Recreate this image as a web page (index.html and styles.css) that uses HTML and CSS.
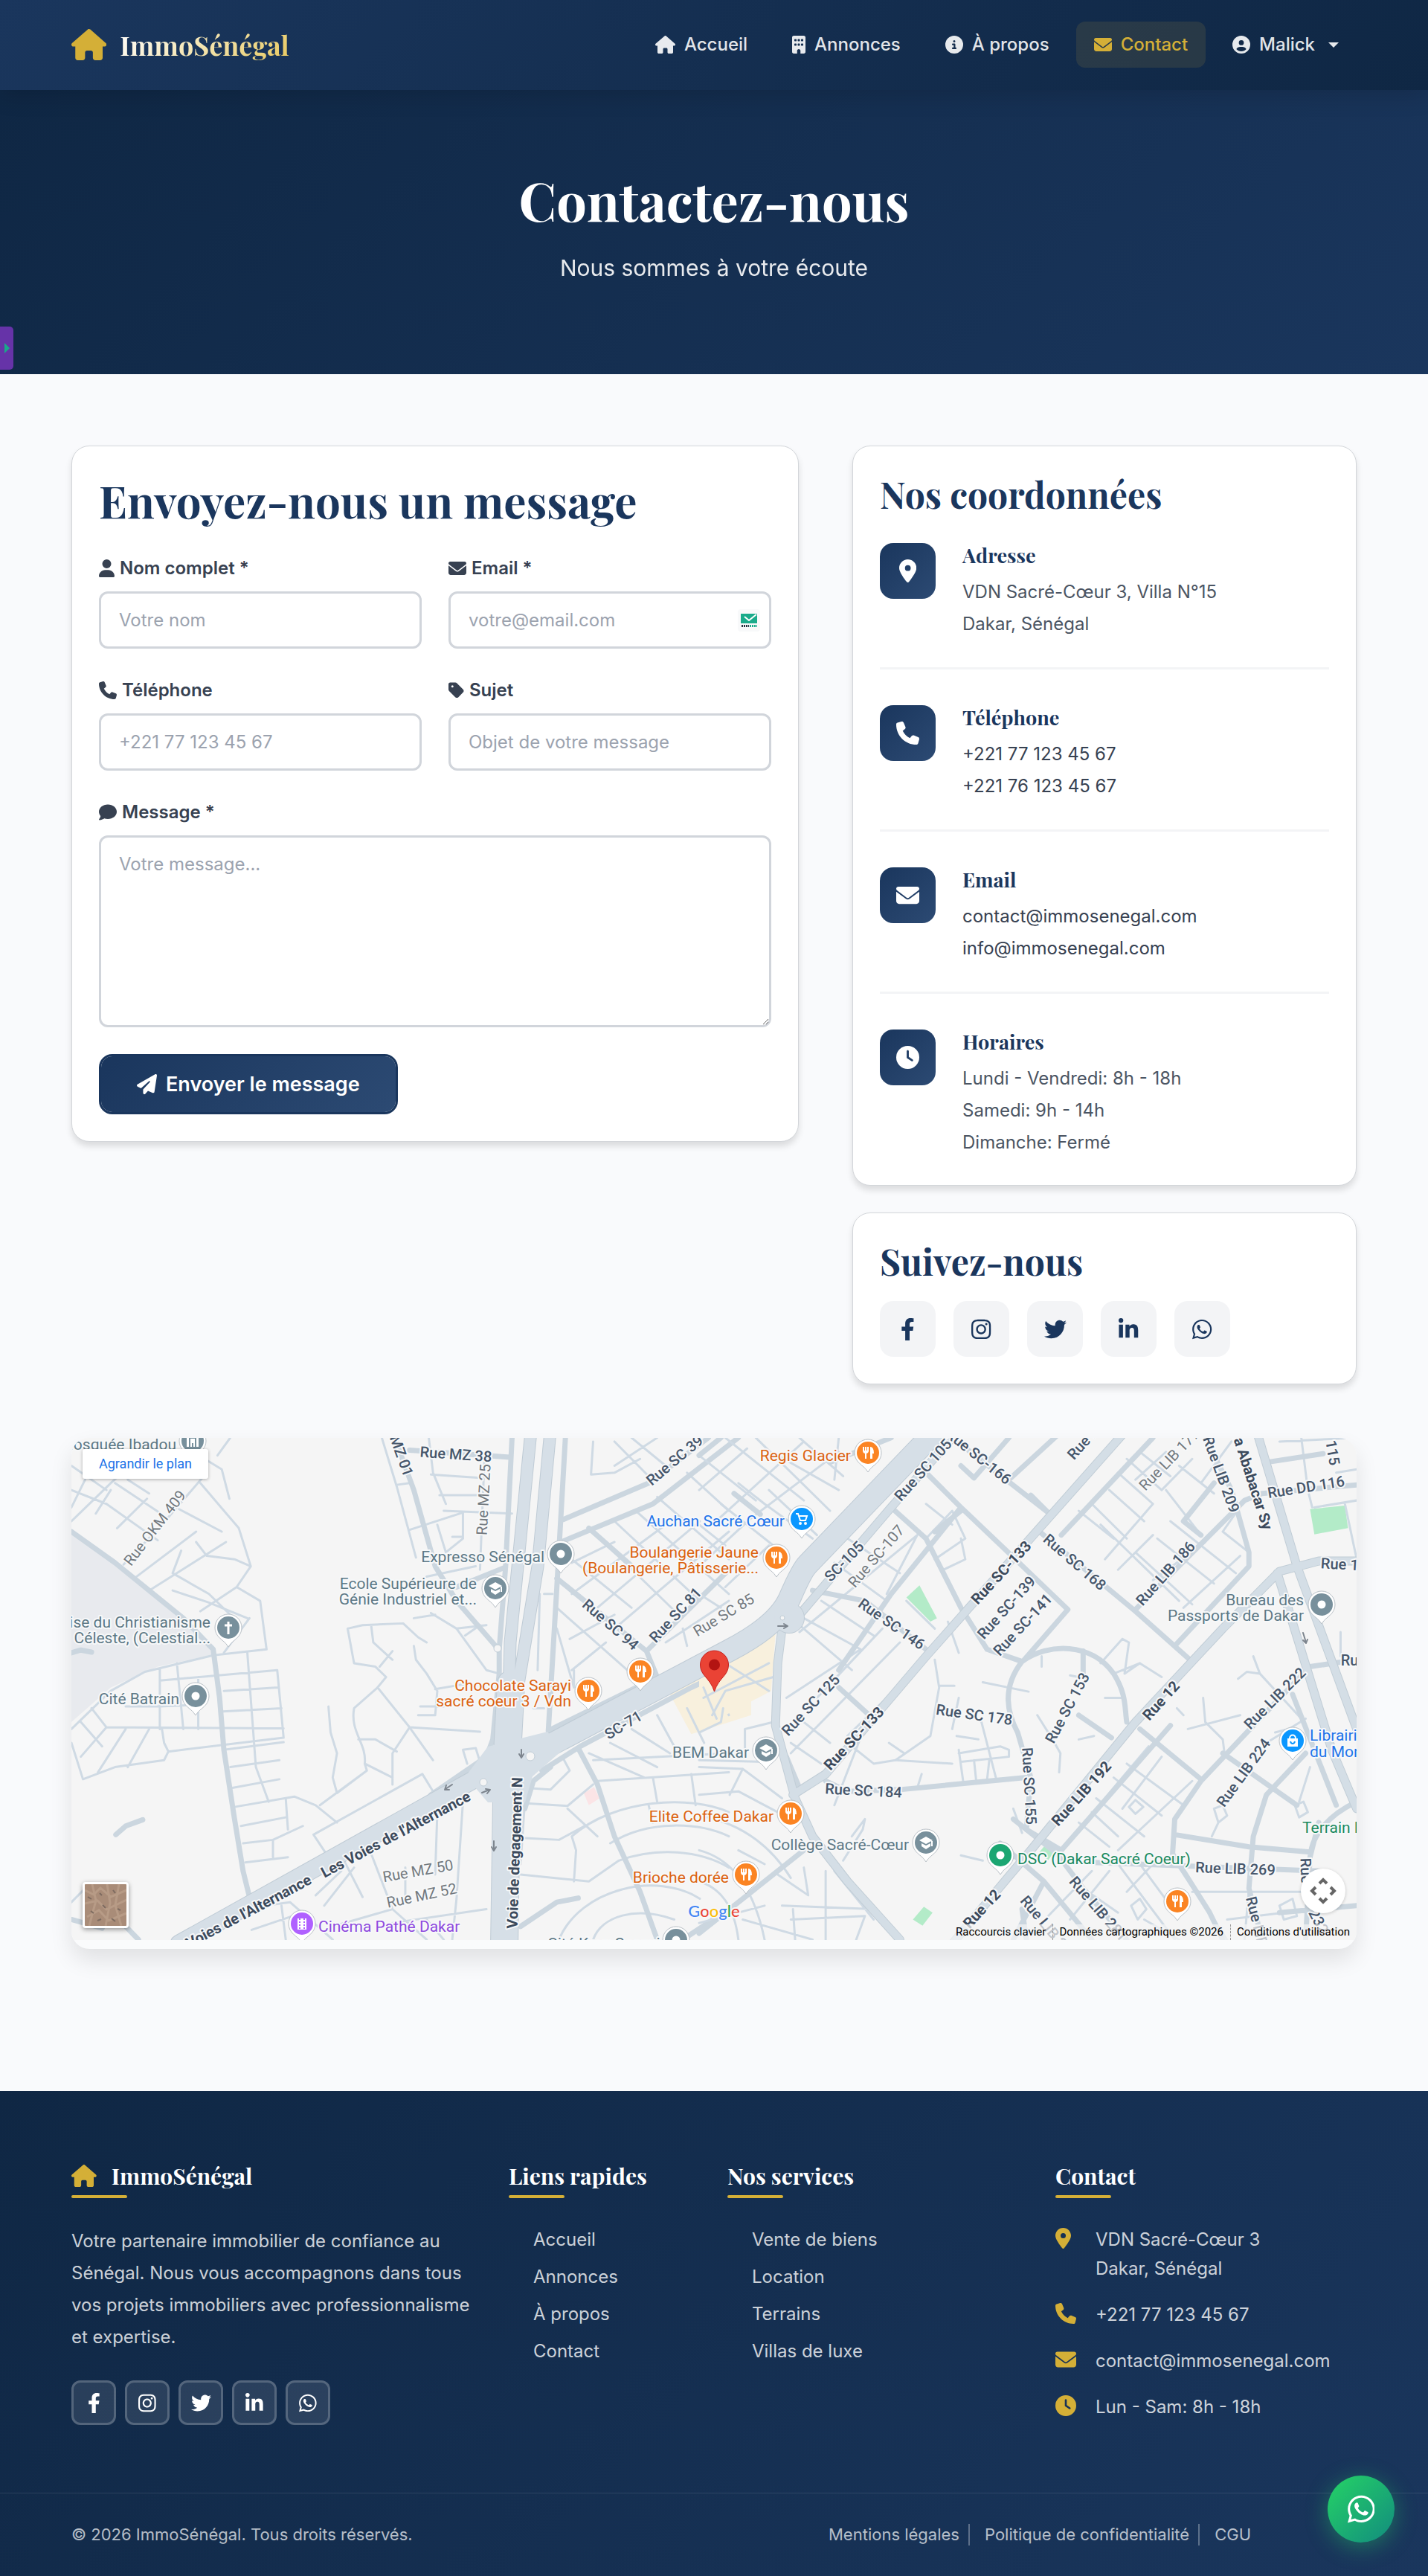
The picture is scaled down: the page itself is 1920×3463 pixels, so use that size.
FILE: index.html
```html
<!DOCTYPE html>
<html lang="fr">
<head>
<meta charset="utf-8">
<meta name="viewport" content="width=device-width, initial-scale=1">
<title>Contact - ImmoSénégal</title>
<link rel="stylesheet" href="styles.css">
</head>
<body>
<svg class="sprite" aria-hidden="true">
  <defs>
    <path id="i-home" d="M575.8 255.5c0 18-15 32.1-32 32.1h-32l.7 160.2c0 2.7-.2 5.4-.5 8.1V472c0 22.1-17.9 40-40 40H456c-1.1 0-2.2 0-3.3-.1c-1.4 .1-2.8 .1-4.2 .1H416 392c-22.1 0-40-17.9-40-40V448 384c0-17.7-14.3-32-32-32H256c-17.7 0-32 14.3-32 32v64 24c0 22.1-17.9 40-40 40H160 128.1c-1.5 0-3-.1-4.5-.2c-1.2 .1-2.4 .2-3.6 .2H104c-22.1 0-40-17.9-40-40V360c0-.9 0-1.9 .1-2.8V287.6H32c-18 0-32-14-32-32.1c0-9 3-17 10-24L266.4 8c7-7 15-8 22-8s15 2 21 7L564.8 231.5c8 7 12 15 11 24z"/>
    <path id="i-building" d="M48 0C21.5 0 0 21.5 0 48V464c0 26.5 21.5 48 48 48h96V432c0-26.5 21.5-48 48-48s48 21.5 48 48v80h96c26.5 0 48-21.5 48-48V48c0-26.5-21.5-48-48-48H48zM64 240c0-8.800 7.200-16 16-16h32c8.800 0 16 7.200 16 16v32c0 8.800-7.200 16-16 16H80c-8.800 0-16-7.200-16-16V240zm112-16h32c8.800 0 16 7.200 16 16v32c0 8.800-7.200 16-16 16H176c-8.800 0-16-7.200-16-16V240c0-8.800 7.200-16 16-16zm80 16c0-8.800 7.200-16 16-16h32c8.800 0 16 7.200 16 16v32c0 8.800-7.200 16-16 16H272c-8.800 0-16-7.200-16-16V240zM80 96h32c8.800 0 16 7.200 16 16v32c0 8.800-7.200 16-16 16H80c-8.800 0-16-7.200-16-16V112c0-8.800 7.200-16 16-16zm80 16c0-8.800 7.200-16 16-16h32c8.800 0 16 7.200 16 16v32c0 8.800-7.200 16-16 16H176c-8.800 0-16-7.200-16-16V112zM272 96h32c8.800 0 16 7.200 16 16v32c0 8.800-7.200 16-16 16H272c-8.800 0-16-7.200-16-16V112c0-8.800 7.200-16 16-16z"/>
    <path id="i-info" d="M256 512A256 256 0 1 0 256 0a256 256 0 1 0 0 512zM216 336h24V272H216c-13.300 0-24-10.700-24-24s10.700-24 24-24h48c13.300 0 24 10.700 24 24v88h8c13.300 0 24 10.700 24 24s-10.700 24-24 24H216c-13.300 0-24-10.700-24-24s10.700-24 24-24zm40-208a32 32 0 1 1 0 64 32 32 0 1 1 0-64z"/>
    <path id="i-mail" d="M48 64C21.5 64 0 85.5 0 112c0 15.100 7.100 29.300 19.200 38.400L236.800 313.600c11.400 8.500 27 8.500 38.400 0L492.800 150.400c12.100-9.100 19.200-23.300 19.200-38.400c0-26.500-21.500-48-48-48H48zM0 176V384c0 35.300 28.700 64 64 64H448c35.300 0 64-28.700 64-64V176L294.400 339.200c-22.800 17.100-54 17.100-76.800 0L0 176z"/>
    <path id="i-account" d="M399 384.2C376.900 345.800 335.400 320 288 320H224c-47.400 0-88.900 25.800-111 64.200c35.200 39.200 86.200 63.800 143 63.800s107.800-24.700 143-63.800zM0 256a256 256 0 1 1 512 0A256 256 0 1 1 0 256zm256 16a72 72 0 1 0 0-144 72 72 0 1 0 0 144z"/>
    <path id="i-user" d="M224 256A128 128 0 1 0 224 0a128 128 0 1 0 0 256zm-45.700 48C79.800 304 0 383.800 0 482.300C0 498.700 13.300 512 29.700 512H418.300c16.400 0 29.700-13.300 29.700-29.700C448 383.800 368.200 304 269.700 304H178.300z"/>
    <path id="i-phone" d="M164.900 24.600c-7.700-18.600-28-28.500-47.400-23.200l-88 24C12.100 30.200 0 46 0 64C0 311.400 200.600 512 448 512c18 0 33.800-12.100 38.600-29.500l24-88c5.300-19.400-4.600-39.700-23.200-47.400l-96-40c-16.300-6.800-35.200-2.100-46.300 11.600L304.700 368C234.300 334.700 177.300 277.700 144 207.300L193.300 167c13.700-11.200 18.400-30 11.600-46.300l-40-96z"/>
    <path id="i-tag" d="M0 80V229.500c0 17 6.700 33.300 18.700 45.300l176 176c25 25 65.500 25 90.500 0L418.700 317.300c25-25 25-65.500 0-90.500l-176-176c-12-12-28.300-18.700-45.300-18.700H48C21.500 32 0 53.500 0 80zm112 32a32 32 0 1 1 0 64 32 32 0 1 1 0-64z"/>
    <path id="i-comment" d="M512 240c0 114.900-114.600 208-256 208c-37.100 0-72.300-6.400-104.100-17.900c-11.900 8.700-31.300 20.600-54.300 30.600C73.600 471.100 44.700 480 16 480c-6.500 0-12.300-3.900-14.800-9.900c-2.500-6-1.100-12.800 3.400-17.400l.3-.3c.3-.3 .7-.7 1.300-1.400c1.100-1.200 2.800-3.100 4.900-5.700c4.100-5 9.600-12.400 15.200-21.600c10-16.600 19.500-38.400 21.400-62.900C17.700 326.800 0 285.100 0 240C0 125.100 114.600 32 256 32s256 93.100 256 208z"/>
    <path id="i-plane" d="M498.100 5.600c10.100 7 15.400 19.100 13.500 31.200l-64 416c-1.500 9.700-7.400 18.200-16 23s-18.900 5.400-28 1.600L284 427.700l-68.500 74.100c-8.900 9.700-22.900 12.900-35.200 8.100S160 493.200 160 480V396.400c0-4 1.500-7.800 4.200-10.700L331.800 202.800c5.800-6.300 5.600-16-.4-22s-15.700-6.400-22-.7L106 360.800 17.700 316.600C7.100 311.300 .3 300.700 0 288.900s5.900-22.800 16.100-28.700l448-256c10.700-6.100 23.900-5.500 34 1.400z"/>
    <path id="i-pin" d="M215.700 499.200C267 435 384 279.400 384 192C384 86 298 0 192 0S0 86 0 192c0 87.400 117 243 168.300 307.200c12.300 15.300 35.100 15.300 47.400 0zM192 128a64 64 0 1 1 0 128 64 64 0 1 1 0-128z"/>
    <path id="i-clock" d="M256 0a256 256 0 1 1 0 512A256 256 0 1 1 256 0zM232 120V256c0 8 4 15.500 10.700 20l96 64c11 7.400 25.900 4.400 33.300-6.700s4.400-25.900-6.700-33.300L280 243.200V120c0-13.300-10.700-24-24-24s-24 10.700-24 24z"/>
    <path id="i-facebook" d="M279.140 288l14.220-92.660h-88.910v-60.130c0-25.350 12.420-50.060 52.240-50.060h40.420V6.260S260.430 0 225.360 0c-73.220 0-121.080 44.380-121.080 124.720v70.620H22.890V288h81.390v224h100.170V288z"/>
    <path id="i-instagram" d="M224.100 141c-63.600 0-114.900 51.300-114.900 114.900s51.300 114.900 114.900 114.900S339 319.500 339 255.900 287.700 141 224.100 141zm0 189.600c-41.100 0-74.700-33.500-74.700-74.700s33.500-74.700 74.700-74.700 74.700 33.500 74.700 74.700-33.600 74.700-74.700 74.700zm146.400-194.300c0 14.900-12 26.800-26.800 26.800-14.900 0-26.800-12-26.800-26.800s12-26.800 26.800-26.800 26.800 12 26.800 26.800zm76.100 27.200c-1.700-35.900-9.900-67.700-36.200-93.900-26.200-26.200-58-34.400-93.900-36.200-37-2.100-147.900-2.100-184.900 0-35.800 1.700-67.600 9.900-93.900 36.100s-34.400 58-36.200 93.900c-2.100 37-2.100 147.900 0 184.900 1.700 35.900 9.900 67.700 36.200 93.900s58 34.400 93.900 36.200c37 2.100 147.900 2.100 184.900 0 35.900-1.700 67.700-9.900 93.900-36.200 26.200-26.200 34.400-58 36.200-93.900 2.100-37 2.100-147.800 0-184.800zM398.800 388c-7.800 19.600-22.900 34.700-42.600 42.600-29.500 11.700-99.500 9-132.100 9s-102.700 2.600-132.100-9c-19.600-7.800-34.700-22.900-42.600-42.600-11.700-29.500-9-99.500-9-132.100s-2.600-102.700 9-132.100c7.800-19.600 22.900-34.700 42.600-42.600 29.500-11.700 99.500-9 132.100-9s102.700-2.600 132.100 9c19.600 7.800 34.700 22.900 42.600 42.600 11.700 29.500 9 99.500 9 132.100s2.700 102.700-9 132.100z"/>
    <path id="i-twitter" d="M459.370 151.716c.325 4.548.325 9.097.325 13.645 0 138.720-105.583 298.558-298.558 298.558-59.452 0-114.680-17.219-161.137-47.106 8.447.974 16.568 1.299 25.340 1.299 49.055 0 94.213-16.568 130.274-44.832-46.132-.975-84.792-31.188-98.112-72.772 6.498.974 12.995 1.624 19.818 1.624 9.421 0 18.843-1.300 27.614-3.573-48.081-9.747-84.143-51.980-84.143-102.985v-1.299c13.969 7.797 30.214 12.670 47.431 13.319-28.264-18.843-46.781-51.005-46.781-87.391 0-19.492 5.197-37.360 14.294-52.954 51.655 63.675 129.300 105.258 216.365 109.807-1.624-7.797-2.599-15.918-2.599-24.040 0-57.828 46.782-104.934 104.934-104.934 30.213 0 57.502 12.670 76.670 33.137 23.715-4.548 46.456-13.320 66.599-25.340-7.798 24.366-24.366 44.833-46.132 57.827 21.117-2.273 41.584-8.122 60.426-16.243-14.292 20.791-32.161 39.308-52.628 54.253z"/>
    <path id="i-linkedin" d="M100.280 448H7.400V148.900h92.880zM53.790 108.100C24.090 108.100 0 83.500 0 53.800a53.790 53.790 0 0 1 107.580 0c0 29.700-24.100 54.300-53.790 54.300zM447.900 448h-92.680V302.400c0-34.700-.7-79.200-48.290-79.200-48.290 0-55.690 37.700-55.690 76.700V448h-92.780V148.900h89.080v40.800h1.300c12.400-23.500 42.690-48.300 87.880-48.300 94 0 111.280 61.900 111.280 142.300V448z"/>
    <path id="i-whatsapp" d="M380.900 97.100C339 55.100 283.200 32 223.900 32c-122.400 0-222 99.600-222 222 0 39.100 10.200 77.300 29.600 111L0 480l117.700-30.900c32.400 17.700 68.900 27 106.100 27h.1c122.300 0 224.100-99.600 224.100-222 0-59.300-25.200-115-67.100-157zm-157 341.600c-33.200 0-65.700-8.900-94-25.700l-6.700-4-69.800 18.300L72 359.200l-4.400-7c-18.500-29.400-28.200-63.300-28.200-98.200 0-101.700 82.800-184.500 184.600-184.500 49.300 0 95.600 19.200 130.400 54.100 34.800 34.900 56.200 81.200 56.100 130.500 0 101.800-84.900 184.600-186.600 184.600zm101.200-138.200c-5.500-2.800-32.800-16.200-37.900-18-5.100-1.900-8.800-2.800-12.500 2.800-3.700 5.600-14.300 18-17.600 21.800-3.200 3.700-6.500 4.200-12 1.400-32.600-16.300-54-29.100-75.500-66-5.700-9.800 5.700-9.100 16.300-30.300 1.800-3.700.9-6.900-.5-9.700-1.400-2.800-12.500-30.100-17.100-41.200-4.500-10.800-9.100-9.300-12.500-9.500-3.200-.2-6.900-.2-10.600-.2-3.700 0-9.700 1.400-14.800 6.900-5.100 5.600-19.400 19-19.400 46.300 0 27.300 19.900 53.700 22.600 57.400 2.800 3.700 39.100 59.700 94.800 83.800 35.200 15.200 49 16.500 66.600 13.900 10.700-1.600 32.800-13.400 37.400-26.400 4.600-13 4.600-24.100 3.200-26.400-1.300-2.500-5-3.900-10.500-6.600z"/>
    <!-- Map markers -->
    <g id="m-base"><path class="pin-shell" d="M0-19a18 18 0 0 1 18 18c0 9-6 14-11 18Q3 20 0 25Q-3 20-7 17c-5-4-11-9-11-18A18 18 0 0 1 0-19z"/><circle r="15" cy="-1" fill="currentColor"/></g>
    <g id="m-dot"><use href="#m-base"/><circle r="5.500" cy="-1" fill="#fff"/></g>
    <g id="m-food"><use href="#m-base"/><path d="M-6-9v6M-3-9v6M0-9v6M-3-3v10" stroke="#fff" stroke-width="2"/><path d="M-7-4h8q0 4-4 4t-4-4M3-9q5 0 5 9H6v7H3z" fill="#fff"/></g>
    <g id="m-school"><use href="#m-base"/><path d="M-9-4L0-9 9-4 0 1zM-6 0l6 3 6-3v4L0 8l-6-4zM7-3h2v7H7z" fill="#fff"/></g>
  </defs>
</svg>

<header class="site-header">
  <a class="brand" href="#"><svg class="brand-icon" viewBox="0 0 576 512"><use href="#i-home"/></svg><span class="brand-name">ImmoSénégal</span></a>
  <nav class="main-nav" aria-label="Navigation principale">
    <a class="nav-link" href="#"><svg viewBox="0 0 576 512"><use href="#i-home"/></svg>Accueil</a>
    <a class="nav-link" href="#"><svg viewBox="0 0 384 512"><use href="#i-building"/></svg>Annonces</a>
    <a class="nav-link" href="#"><svg viewBox="0 0 512 512"><use href="#i-info"/></svg>À propos</a>
    <a class="nav-link active" href="#"><svg viewBox="0 0 512 512"><use href="#i-mail"/></svg>Contact</a>
    <button class="nav-link" type="button"><svg viewBox="0 0 512 512"><use href="#i-account"/></svg>Malick<span class="caret"></span></button>
  </nav>
</header>

<section class="hero">
  <h1>Contactez-nous</h1>
  <p>Nous sommes à votre écoute</p>
</section>
<button class="side-tab" type="button" aria-label="Ouvrir le panneau"><span></span></button>

<main class="page">
  <div class="contact-grid">
    <section class="card">
      <h2 class="form-title">Envoyez-nous un message</h2>
      <form class="form">
        <div class="field">
          <label for="name"><svg viewBox="0 0 448 512"><use href="#i-user"/></svg>Nom complet *</label>
          <input id="name" type="text" placeholder="Votre nom">
        </div>
        <div class="field">
          <label for="email"><svg viewBox="0 0 512 512"><use href="#i-mail"/></svg>Email *</label>
          <div class="input-wrap">
            <input id="email" type="email" placeholder="votre@email.com">
            <svg class="input-badge" viewBox="0 0 30 30"><rect width="30" height="30" rx="4" fill="#f8f9fa"/><path d="M4 6h22v13H4z" fill="#1aab8b"/><path d="M9 10l6 5L25 7" fill="none" stroke="#fff" stroke-width="2"/><path d="M5 22.500h10" stroke="#26323f" stroke-width="3" stroke-dasharray="2 1"/><path d="M16 22.500h10" stroke="#1aab8b" stroke-width="3" stroke-dasharray="2 1"/></svg>
          </div>
        </div>
        <div class="field">
          <label for="phone"><svg viewBox="0 0 512 512"><use href="#i-phone"/></svg>Téléphone</label>
          <input id="phone" type="tel" placeholder="+221 77 123 45 67">
        </div>
        <div class="field">
          <label for="subject"><svg viewBox="0 0 448 512"><use href="#i-tag"/></svg>Sujet</label>
          <input id="subject" type="text" placeholder="Objet de votre message">
        </div>
        <div class="field wide">
          <label for="message"><svg viewBox="0 0 512 512"><use href="#i-comment"/></svg>Message *</label>
          <textarea id="message" placeholder="Votre message..."></textarea>
        </div>
        <button class="submit" type="submit"><svg viewBox="0 0 512 512"><use href="#i-plane"/></svg>Envoyer le message</button>
      </form>
    </section>

    <div class="side">
      <section class="card">
        <h3 class="card-title">Nos coordonnées</h3>
        <ul class="info-list">
          <li><span class="info-icon"><svg viewBox="0 0 384 512"><use href="#i-pin"/></svg></span><div><h4>Adresse</h4><p>VDN Sacré-Cœur 3, Villa N°15<br>Dakar, Sénégal</p></div></li>
          <li><span class="info-icon"><svg viewBox="0 0 512 512"><use href="#i-phone"/></svg></span><div><h4>Téléphone</h4><p><a href="#">+221 77 123 45 67</a><br><a href="#">+221 76 123 45 67</a></p></div></li>
          <li><span class="info-icon"><svg viewBox="0 0 512 512"><use href="#i-mail"/></svg></span><div><h4>Email</h4><p><a href="#">contact@immosenegal.com</a><br><a href="#">info@immosenegal.com</a></p></div></li>
          <li><span class="info-icon"><svg viewBox="0 0 512 512"><use href="#i-clock"/></svg></span><div><h4>Horaires</h4><p>Lundi - Vendredi: 8h - 18h<br>Samedi: 9h - 14h<br>Dimanche: Fermé</p></div></li>
        </ul>
      </section>
      <section class="card">
        <h3 class="card-title tight">Suivez-nous</h3>
        <div class="follow">
          <a href="#" aria-label="Facebook"><svg viewBox="0 0 320 512"><use href="#i-facebook"/></svg></a>
          <a href="#" aria-label="Instagram"><svg viewBox="0 0 448 512"><use href="#i-instagram"/></svg></a>
          <a href="#" aria-label="Twitter"><svg viewBox="0 0 512 512"><use href="#i-twitter"/></svg></a>
          <a href="#" aria-label="LinkedIn"><svg viewBox="0 0 448 512"><use href="#i-linkedin"/></svg></a>
          <a href="#" aria-label="WhatsApp"><svg viewBox="0 0 448 512"><use href="#i-whatsapp"/></svg></a>
        </div>
      </section>
    </div>
  </div>

  <section class="map" aria-label="Plan">
    <svg class="map-canvas" viewBox="0 0 1728 675" preserveAspectRatio="xMidYMid slice">
      <rect width="1728" height="675" fill="#f5f5f5"/>
      <!-- West half of the plan -->
      <g class="roads" transform="translate(-16 -23) scale(.574 .4656)">
        <path class="area-grey" d="M28 320L130 410 230 510 330 620 360 675 230 710 120 770 28 870Z"/>
        <path class="area-sand" d="M1430 790L1530 725 1620 680V850L1480 905Z"/>
        <path class="area-pink" d="M1228 1075L1252 1058 1265 1090 1240 1110Z"/>
        <path class="s" d="M28 200L110 240 230 345M28 290L120 180 200 90M150 415L240 300 345 150M85 268L120 200M135 310L205 225M175 455L320 320M210 490L390 350M265 490L350 525 440 570M330 180L420 310 448 420 415 480 470 520 485 660 360 677M285 375L265 440 350 500 400 560M445 570L385 670M280 255L380 320M340 110L380 140 398 225M320 350L345 390 410 400 448 420M330 550L415 480M28 130L110 200M60 170L28 250M130 180L240 270M370 100L400 49M160 170L210 210"/>
        <path class="s" d="M28 890L120 780 200 725 360 677M235 715V890M275 700L290 890M325 740V890M235 750L510 720 525 915 255 955M155 825H240M110 885L525 888M110 885L50 970M28 930L55 1035 130 1000 245 980 255 955M155 890L90 1015M240 890L245 930 255 955M210 890L160 1000M75 830L110 885M50 870L100 940M440 670L460 1000 490 1100M375 840L520 830M385 780L512 770M400 1000L515 980M405 1060L515 1035M410 1115L550 1085 600 1110 650 1160M425 1170L530 1145M430 1220L500 1210 570 1170M435 1275L535 1260M500 1210V1260M530 1090L535 1180M235 825L325 820M385 950L525 928"/>
        <path class="s" d="M675 600L710 590 805 585 840 625 860 640M675 600L690 700 740 710 765 740 745 770 690 830C680 900 720 930 715 990L780 1030M730 590L735 640 780 690M830 650L835 690 860 730M780 665L750 710M745 770L820 885 780 960V1050M820 885L985 898M860 730L885 780 880 850M700 920H740L790 955M820 885L875 980M630 825L635 900 650 960 640 1030 650 1075M610 1110L720 1010M595 1195L850 1020 875 1070M595 1195L630 1260M880 775L950 760M845 825H900M870 555L930 600 1000 720 1030 730M880 560L830 570M930 600L1000 590M955 990L945 950 975 945 985 985M650 1075L720 1010 715 990M950 620L985 590M840 850L880 850"/>
        <path class="s" d="M755 49L790 190 835 395M865 49L875 150 905 240M870 155L985 165M890 215H980M900 260L1060 268M820 315L945 265V340M995 120L985 430M790 185L820 180M860 450L975 420M885 300L905 380 945 340M920 335H945M1135 500H1155"/>
        <path class="s" d="M1200 400L1340 540M1250 320L1450 560M1300 290L1500 520M1350 260L1568 500M1200 500L1420 300M1250 550L1500 290M1300 600L1568 320M1165 540L1330 720M1200 720L1280 640M1200 410L1300 350M1195 630L1300 560M1400 220L1568 400M1470 150L1568 260M1250 60L1245 155 1300 150 1360 110M1300 60L1380 160M1340 49L1420 130M1400 49L1300 130M1460 600L1470 650M1420 640L1568 520M1110 540L1125 500 1120 720M1110 830H1135M1205 720V770M1165 600L1205 770"/>
        <path class="s" d="M1260 1040L1568 1015M1390 1030L1400 1100M1480 1020L1490 1110M1090 1060L1150 1065 1195 1010 1180 975M1100 1105L1190 1112 1250 1050M1250 980L1568 960M1200 1200C1300 1090 1480 1080 1568 1130M1290 1220C1380 1150 1500 1160 1568 1200M1310 1270C1400 1230 1500 1240 1568 1290M1090 1205L1170 1210 1230 1170M1080 1310L1240 1330 1310 1270M1170 1498C1220 1350 1400 1300 1500 1380M1200 1200L1210 1240 1205 1330M1080 1280L1090 1100M1240 960L1370 1030M1290 930L1400 1000M1340 890L1430 960M1400 850L1440 940M1470 830L1510 930M1530 760L1568 850M1250 1498C1270 1430 1350 1400 1440 1440M1190 1120L1260 1200M1380 1110L1390 1160"/>
        <path class="s" d="M650 1230L710 1375M730 1250L780 1410M885 1130L880 1310M945 1100L930 1380 920 1498M660 1300L600 1370M780 1410L860 1498M540 1390L640 1498M690 1290L620 1400M780 1410L640 1460M1000 1410L780 1450M570 1420L450 1470M690 1240L740 1200M810 1290V1380M860 1440L900 1498M28 1390L60 1350M480 1400L540 1390M520 1400L530 1498"/>
        <path class="m" d="M28 320L130 410 230 510 290 570 360 660 375 800 385 950 410 1150 430 1300 450 1400M785 49L830 200 880 420 930 520 1025 655M820 85L1055 105M930 480L1040 425M1165 455L1375 665 1400 740M1180 285L1380 180 1520 49M1175 350L1390 240 1590 49M1375 665L1568 430M1130 1010L1220 940 1480 770 1620 690M1215 945L1260 1050 1300 1200 1360 1360 1400 1498M1080 1460L1165 1390 1215 1378M1460 1498L1568 1410M28 1440L100 1465M155 1460L185 1498M28 670L50 662 75 668M132 1195L155 1170 195 1152M1240 310L1350 430"/>
        <path class="m" d="M1060 49L1045 420 1030 660V730L1015 920 1000 970 870 1080 860 1110M1185 49L1165 480 1145 895 1400 740M1090 1120L1110 1040 1150 1000"/>
      </g>
      <!-- East half of the plan -->
      <g class="roads" transform="translate(844 -23) scale(.5867 .4656)">
        <path class="area-sand" d="M0 715L175 615 165 780 0 890Z"/>
        <path class="area-green" d="M475 510L505 475 545 570 530 580ZM1400 255L1480 245 1487 310 1410 328ZM490 1440L515 1403 535 1420 512 1458ZM780 1245L795 1222 812 1248 800 1268Z"/>
        <path class="s" d="M0 100L130 230M60 49L240 230M130 49L300 260M230 49L330 160M0 200L110 80M30 300L240 60M110 290L320 90M0 420L120 280M60 480L160 360M0 300L60 360M90 180L150 240 260 340M50 240L180 370M160 200L270 330M0 500L50 540M320 49L310 170M180 100L320 200"/>
        <path class="s" d="M310 410L430 520M340 340L460 440M430 500L500 330M240 570L370 660M280 520L400 620M230 610L500 330M230 590L350 720M370 660L200 800M420 600L270 800M460 640L210 960M520 690L340 910M540 690L550 770 530 910 450 980 400 990 340 930M550 765H585M435 930L470 960M390 850L310 1110M240 870L300 930M210 930L280 990M520 340L580 260 610 340 540 400M560 430L610 400 600 340M520 240L580 300M570 580L595 670M475 520L540 600M10 800L160 700M30 850L60 780 170 740M0 900L50 870 55 830M60 700L160 780M105 960V890L170 870M10 770L40 860"/>
        <path class="s" d="M580 890L595 800M645 860L680 1030M595 960L690 940 710 950V970L600 985M595 950L605 1040M630 980L635 1040M665 980L660 1035M775 850L810 920 828 960 825 1015M650 755L755 782M785 680V710M930 800H975M590 910L640 920M500 1060L510 1020M450 980L580 990M905 910L870 920M850 735L890 745M720 1120L740 1190M350 1200L380 1150 375 1180 330 1270M600 1255L650 1270M970 630L985 640 975 730 1010 700 1060 740M970 630L920 700M950 730L1010 700M1095 830L1110 850"/>
        <path class="s" d="M940 200L1020 290M960 150L1040 240M980 110L1060 200M1010 90L1080 160M900 240L980 340M920 300L1100 520M930 400L1040 240M1040 460L1160 350M1070 200L1150 330M1110 540L1240 390M1080 290L1230 440M1050 340L1180 470M1000 380L1130 530M960 430L1040 330M870 260L950 340M1200 320L1260 380M1250 230L1200 320M1150 180L1220 60M1060 200L1130 110M1000 170L1070 90M1100 130L1180 210"/>
        <path class="s" d="M1030 940L950 1060 860 1200M980 990L1110 1110M950 1030L1060 1140M910 1090L1020 1200M1130 1040L960 1240M1060 970L970 1120M900 1130L960 1200M870 1160L940 1230M1000 1095L985 1115 1000 1135 1018 1115ZM1120 890L1240 850M1155 800L1160 870 1200 920 1205 970M1235 745L1255 725 1285 730 1270 680M1285 730L1380 860M1300 930L1390 860M1470 610V680M1380 49L1395 200 1405 250M1507 230L1410 250M1480 240L1507 400M1460 150L1507 140M1330 60L1507 49"/>
        <path class="s" d="M900 1300L800 1430M940 1300L850 1440M880 1350L960 1420M960 1280L1090 1498M1010 1280L1080 1400M1100 1290L1210 1498M1130 1360H1380M990 1400L1010 1380 1025 1410 1005 1440ZM1020 1440L1100 1498M1040 1280L980 1360M1260 1350L1250 1498M1330 1400L1360 1380 1370 1430 1340 1440ZM1210 1440L1340 1420M1180 1120L1200 1110 1210 1140 1190 1160ZM1365 1110L1385 1100 1395 1130 1375 1145ZM1175 1200L1190 1160M1400 1000L1375 1100M1320 900L1350 890"/>
        <path class="s" d="M0 1080L90 1070 210 1150M0 1140C90 1160 160 1220 210 1320M0 1240C60 1260 120 1320 150 1498M0 1000L100 1005 70 1080M100 1005L190 1090M0 1330C50 1350 80 1400 90 1498M180 1310L250 1370 240 1290M290 1300V1498M190 1400L400 1410M210 1440L380 1430 360 1498M0 1450L150 1400M215 1410L220 1498M0 980L150 985M100 1440L260 1498M310 1300L400 1440M150 1280L90 1240"/>
        <path class="m" d="M580 49L800 265 760 215M710 170L840 20M520 150L600 250 700 370 845 545 745 690M780 320L1000 550 1125 690M440 250L520 340 600 540 660 660 740 695M740 695C800 640 900 640 950 730 980 790 975 830 980 870M740 695C700 760 700 830 730 900L760 1030 750 1180 830 1240M260 490L380 520 520 660M600 250L440 500 320 720M540 320L600 260M600 130L630 165 710 49M1040 49L830 330M1250 230L1000 545M1090 650L1260 420V380L1220 200 1160 49M1180 180L1110 290 1150 330M1290 210L1507 185M1290 210L1250 230"/>
        <path class="m" d="M1507 690L1400 710 1270 880 1150 1040 1090 1150 1085 1250 1170 1420 1200 1498M1200 960L1370 1110M1390 960L1300 1080 1270 1200 1260 1350 1290 1498M1090 1195L1260 1230 1400 1245M290 1040L340 1070 460 1065 750 1030M320 770L390 850M900 1275L1420 1300M1420 1160L1400 1260 1390 1498M1507 1100C1440 1140 1400 1200 1400 1270M1010 890L1150 1035M870 850L945 915M880 665V740M720 1150L820 1250 880 1350 980 1498M690 1220L790 1330 900 1498M790 1330L720 1498M830 1240L1080 880M300 120L440 49M0 100L50 49M0 1480L150 1330 240 1240M80 210L140 270M200 970L230 1060M1300 120L1430 95M1360 790L1460 1110M740 1410L750 1498M1330 1420L1507 1400"/>
        <path class="l-edge" d="M970 40L780 310 520 680 290 1020 215 1080M1507 405H1420L1330 435 1200 600 1000 870 760 1240 580 1510M190 600L180 700 175 880 220 1090 260 1200 340 1330 460 1498M1280 40L1370 420 1507 890M1325 440L1450 950 1507 1120M230 560L440 250 580 49"/>
        <path class="l" d="M970 40L780 310 520 680 290 1020 215 1080M1507 405H1420L1330 435 1200 600 1000 870 760 1240 580 1510M190 600L180 700 175 880 220 1090 260 1200 340 1330 460 1498M1280 40L1370 420 1507 890M1325 440L1450 950 1507 1120M230 560L440 250 580 49"/>
      </g>
      <g class="highways">
        <path class="h-edge" stroke-width="31" d="M600 436L884 286Q950 252 966 215T990 170L1165-12"/>
        <path class="h-edge" stroke-width="25" d="M574 441L145 680"/>
        <path class="h-edge" stroke-width="17" d="M618-9L590 275 586 424M644-9L627 173 601 331"/>
        <path class="h-edge" stroke-width="38" d="M591 331L586 424 582 685"/>
        <circle cx="965" cy="242" r="21" class="h-node-edge"/>
        <path class="h" stroke-width="29" d="M600 436L884 286Q950 252 966 215T990 170L1165-12"/>
        <path class="h" stroke-width="23" d="M574 441L145 680"/>
        <path class="h" stroke-width="15" d="M618-9L590 275 586 424M644-9L627 173 601 331"/>
        <path class="h" stroke-width="36" d="M591 331L586 424 582 685"/>
        <circle cx="965" cy="242" r="20" fill="#d6dfe7"/>
        <path d="M530 455L560 415 640 395 660 420 620 455 610 490 560 490Z" fill="#d6dfe7"/>
        <circle cx="617" cy="428" r="6" class="island"/><circle cx="554" cy="463" r="5" class="island"/><circle cx="573" cy="283" r="5" class="island"/><circle cx="956" cy="242" r="3" class="island"/>
        <path class="arrow" d="M605 419v10m-3-4l3 5 3-5M512 466l-9 6m1-5l-2 6 6 0M552 477l10-4m-5-1l6 1-4 5M568 542v12m-3-4l3 5 3-5M950 253h12m-4-3l5 3-5 3M1656 262l4 13m-4-3l4 4 2-5"/>
      </g>
      <!-- Street names -->
      <g class="streets">
        <g class="minor">
          <text transform="translate(112 121) rotate(-52)">Rue OKM 409</text>
          <text transform="translate(554 83) rotate(-87)">Rue MZ 25</text>
          <text transform="translate(877 238) rotate(-31)">Rue SC 85</text>
          <text transform="translate(466 582) rotate(-10)">Rue MZ 50</text>
          <text transform="translate(471 615) rotate(-12)">Rue MZ 52</text>
          <text transform="translate(1082 159) rotate(-49)">Rue SC-107</text>
          <text transform="translate(1476 29) rotate(-46)">Rue LIB 177</text>
        </g>
        <text transform="translate(517 22) rotate(4)">Rue MZ 38</text>
        <text transform="translate(444 24) rotate(70)">MZ 01</text>
        <text transform="translate(811 30) rotate(-40)">Rue SC 39</text>
        <text transform="translate(725 251) rotate(41)">Rue SC 94</text>
        <text transform="translate(812 238) rotate(-47)">Rue SC 81</text>
        <text transform="translate(742 386) rotate(-31)">SC-71</text>
        <text transform="translate(1145 43) rotate(-48)">Rue SC 105</text>
        <text transform="translate(1039 166) rotate(-46)">SC-105</text>
        <text transform="translate(1220 25) rotate(39)">Rue SC-166</text>
        <text transform="translate(1375 -10) rotate(-48)">Rue LIB 12</text>
        <text transform="translate(1546 49) rotate(70)">Rue LIB 209</text>
        <text transform="translate(1696 20) rotate(80)">115</text>
        <text transform="translate(1660 66) rotate(-9)">Rue DD 116</text>
        <text transform="translate(1711 170) rotate(3)">Rue 12</text>
        <text transform="translate(1257 228) rotate(-48)">Rue SC-139</text>
        <text transform="translate(1279 251) rotate(-47)">Rue SC-141</text>
        <text transform="translate(1349 167) rotate(41)">Rue SC 168</text>
        <text transform="translate(1471 182) rotate(-48)">Rue LIB 186</text>
        <text transform="translate(1103 250) rotate(35)">Rue SC 146</text>
        <text transform="translate(1724 299)">Rue</text>
        <text transform="translate(1618 350) rotate(-45)">Rue LIB 222</text>
        <text transform="translate(994 359) rotate(-47)">Rue SC 125</text>
        <text transform="translate(1214 372) rotate(8)">Rue SC 178</text>
        <text transform="translate(1339 363) rotate(-62)">Rue SC 153</text>
        <text transform="translate(1288 468) rotate(87)">Rue SC 155</text>
        <text transform="translate(1576 450) rotate(-54)">Rue LIB 224</text>
        <text transform="translate(1065 474) rotate(3)">Rue SC 184</text>
        <text transform="translate(1565 579) rotate(2)">Rue LIB 269</text>
        <text transform="translate(1381 633) rotate(49)">Rue LIB 281</text>
        <text transform="translate(1311 655) rotate(50)">Rue LIB 28</text>
        <text transform="translate(1594 650) rotate(76)">Rue LIB</text>
        <text transform="translate(1660 582) rotate(88)">Rue</text>
        <text transform="translate(1677 650) rotate(62)">232</text>
        <g class="major">
          <text transform="translate(436 533) rotate(-28)">Les Voies de l'Alternance</text>
          <text transform="translate(222 645) rotate(-28)">Les Voies de l'Alternance</text>
          <text transform="translate(596 558) rotate(-88)">Voie de degagement N</text>
          <text transform="translate(1588 58) rotate(72)">fa Ababacar Sy</text>
          <text transform="translate(1250 181) rotate(-47)">Rue SC-133</text>
          <text transform="translate(1052 404) rotate(-47)">Rue SC-133</text>
          <text transform="translate(1465 353) rotate(-48)">Rue 12</text>
          <text transform="translate(1358 478) rotate(-48)">Rue LIB 192</text>
          <text transform="translate(1224 633) rotate(-47)">Rue 12</text>
        </g>
      </g>
      <!-- Places -->
      <g class="places">
        <g class="grey">
          <text class="end" x="141" y="16">Mosquée Ibadou</text>
          <text class="end" x="636" y="167">Expresso Sénégal</text>
          <text class="end" x="545" y="203">Ecole Supérieure de</text><text class="end" x="545" y="224">Génie Industriel et...</text>
          <text class="end" x="187" y="255">Eglise du Christianisme</text><text class="end" x="187" y="276">Céleste, (Celestial...</text>
          <text class="end" x="145" y="358">Cité Batrain</text>
          <text class="end" x="911" y="430">BEM Dakar</text>
          <text x="640" y="687">Cité Keur Gorgui</text>
          <text class="end" x="1657" y="225">Bureau des</text><text class="end" x="1657" y="246">Passports de Dakar</text>
          <text class="end" x="1126" y="554">Collège Sacré-Cœur</text>
        </g>
        <g class="orange">
          <text class="end" x="672" y="340">Chocolate Sarayi</text><text class="end" x="672" y="361">sacré coeur 3 / Vdn</text>
          <text class="end" x="924" y="161">Boulangerie Jaune</text><text class="end" x="924" y="182">(Boulangerie, Pâtisserie...</text>
          <text class="end" x="1048" y="31">Regis Glacier</text>
          <text class="end" x="944" y="516">Elite Coffee Dakar</text>
          <text class="end" x="884" y="598">Brioche dorée</text>
        </g>
        <g class="blue"><text class="end" x="959" y="119">Auchan Sacré Cœur</text><text x="1665" y="407">Librairie</text><text x="1665" y="429">du Monde</text></g>
        <g class="green"><text x="1272" y="573">DSC (Dakar Sacré Coeur)</text><text x="1655" y="531">Terrain LIB</text></g>
        <text class="purple" x="332" y="664">Cinéma Pathé Dakar</text>
      </g>
      <g color="#78909c">
        <g transform="translate(163 5)"><use href="#m-base"/><path d="M-8-6h3v13h-3zM-3-4h6v11h-2v-5h-2v5h-2zM5-6h3v13H5z" fill="#fff"/></g>
        <use href="#m-dot" x="658" y="157"/><use href="#m-school" x="570" y="203"/>
        <g transform="translate(211 256)"><use href="#m-base"/><path d="M0-9V8M-5-4H5" stroke="#fff" stroke-width="3"/></g>
        <use href="#m-dot" x="167" y="348"/><use href="#m-school" x="934" y="421"/><use href="#m-dot" x="813" y="676"/><use href="#m-dot" x="1681" y="225"/><use href="#m-school" x="1149" y="545"/>
      </g>
      <g color="#fb8423"><use href="#m-food" x="695" y="341"/><use href="#m-food" x="765" y="315"/><use href="#m-food" x="948" y="162"/><use href="#m-food" x="1071" y="21"/><use href="#m-food" x="967" y="506"/><use href="#m-food" x="907" y="588"/><use href="#m-food" x="1487" y="624"/></g>
      <g color="#0b97ff">
        <g transform="translate(982 110)"><use href="#m-base"/><path d="M-8-8h3l3 9h7l2-6h-10" fill="none" stroke="#fff" stroke-width="2"/><circle cx="-2" cy="5" r="2" fill="#fff"/><circle cx="5" cy="5" r="2" fill="#fff"/></g>
        <g transform="translate(1642 408)"><use href="#m-base"/><path d="M-7-4H7V7H-7z" fill="#fff"/><path d="M-4-4c0-6 8-6 8 0" fill="none" stroke="#fff" stroke-width="2"/><path d="M-3 0c1 4 5 4 6 0" fill="none" stroke="#0b97ff" stroke-width="2"/></g>
      </g>
      <use href="#m-dot" x="1249" y="562" color="#1ba672"/>
      <g transform="translate(310 654)" color="#b061ff"><use href="#m-base"/><path d="M-6-8H6V7H-6z" fill="#fff"/><path d="M-3-8V7M3-8V7" stroke="#b061ff" stroke-width="2" stroke-dasharray="2 2"/></g>
      <path d="M864.500 286a19 19 0 0 1 19 19c0 15-13 17-19 36-6-19-19-21-19-36a19 19 0 0 1 19-19z" fill="#ea4335" stroke="#c5221f"/><circle cx="864.500" cy="305" r="7.500" fill="#b31412"/>
      <text class="google" x="864" y="644"><tspan fill="#4285f4">G</tspan><tspan fill="#ea4335">o</tspan><tspan fill="#fbbc04">o</tspan><tspan fill="#4285f4">g</tspan><tspan fill="#34a853">l</tspan><tspan fill="#ea4335">e</tspan></text>
    </svg>
    <a class="map-enlarge" href="#">Agrandir le plan</a>
    <button class="map-layer" type="button" aria-label="Vue satellite">
      <svg viewBox="0 0 56 56"><rect width="56" height="56" fill="#a98c78"/><path d="M0 8l12 6 9-9 14 12 21-9M0 26l17-4 12 12 27-13M3 44l16-9 13 14 24-10M10 0l5 22-9 34M30 0l4 25-6 31M46 0l-5 28 8 28" fill="none" stroke="#b79b86" stroke-width="3"/><path d="M4 17l5 3M20 12l3 3M38 8l3 4M8 36l4 3M24 28l4 4M44 33l4 2M17 49l5-2M36 46l5 4" stroke="#7d6b60" stroke-width="2"/></svg>
    </button>
    <button class="map-move" type="button" aria-label="Commandes du plan"><svg viewBox="0 0 60 60" fill="none" stroke="#666" stroke-width="4"><path d="M25 20l5-5 5 5M25 40l5 5 5-5M20 25l-5 5 5 5M40 25l5 5-5 5" fill="none"/></svg></button>
    <div class="map-credits"><a href="#">Raccourcis clavier</a><span>Données cartographiques ©2026</span><a href="#">Conditions d'utilisation</a></div>
  </section>
</main>

<footer class="site-footer">
  <div class="footer-main">
    <section>
      <h5><svg viewBox="0 0 576 512"><use href="#i-home"/></svg>ImmoSénégal</h5>
      <p class="about">Votre partenaire immobilier de confiance au Sénégal. Nous vous accompagnons dans tous vos projets immobiliers avec professionnalisme et expertise.</p>
      <div class="socials">
        <a href="#" aria-label="Facebook"><svg viewBox="0 0 320 512"><use href="#i-facebook"/></svg></a>
        <a href="#" aria-label="Instagram"><svg viewBox="0 0 448 512"><use href="#i-instagram"/></svg></a>
        <a href="#" aria-label="Twitter"><svg viewBox="0 0 512 512"><use href="#i-twitter"/></svg></a>
        <a href="#" aria-label="LinkedIn"><svg viewBox="0 0 448 512"><use href="#i-linkedin"/></svg></a>
        <a href="#" aria-label="WhatsApp"><svg viewBox="0 0 448 512"><use href="#i-whatsapp"/></svg></a>
      </div>
    </section>
    <section>
      <h5>Liens rapides</h5>
      <ul class="links"><li><a href="#">Accueil</a></li><li><a href="#">Annonces</a></li><li><a href="#">À propos</a></li><li><a href="#">Contact</a></li></ul>
    </section>
    <section>
      <h5>Nos services</h5>
      <ul class="links"><li><a href="#">Vente de biens</a></li><li><a href="#">Location</a></li><li><a href="#">Terrains</a></li><li><a href="#">Villas de luxe</a></li></ul>
    </section>
    <section>
      <h5>Contact</h5>
      <ul class="reach">
        <li><span class="reach-icon"><svg viewBox="0 0 384 512"><use href="#i-pin"/></svg></span><p>VDN Sacré-Cœur 3<br>Dakar, Sénégal</p></li>
        <li><span class="reach-icon"><svg viewBox="0 0 512 512"><use href="#i-phone"/></svg></span><p>+221 77 123 45 67</p></li>
        <li><span class="reach-icon"><svg viewBox="0 0 512 512"><use href="#i-mail"/></svg></span><p>contact@immosenegal.com</p></li>
        <li><span class="reach-icon"><svg viewBox="0 0 512 512"><use href="#i-clock"/></svg></span><p>Lun - Sam: 8h - 18h</p></li>
      </ul>
    </section>
  </div>
  <div class="footer-bottom">
    <p>© 2026 ImmoSénégal. Tous droits réservés.</p>
    <nav class="legal" aria-label="Informations légales"><a href="#">Mentions légales</a><a href="#">Politique de confidentialité</a><a href="#">CGU</a></nav>
  </div>
</footer>
<a class="whatsapp-float" href="#" aria-label="Discuter sur WhatsApp"><svg viewBox="0 0 448 512"><use href="#i-whatsapp"/></svg></a>
</body>
</html>
```
FILE: styles.css
```css
:root {
  --navy: #1a365d;
  --navy-dark: #0f2744;
  --navy-light: #2c4a73;
  --gold: #d4af37;
  --serif: "Playfair Display", "Liberation Serif", serif;
}
* { box-sizing: border-box; }
body {
  margin: 0;
  position: relative;
  background: #f9fafc;
  color: #374151;
  font: 24px/39px Inter, "Liberation Sans", sans-serif;
}
h1, h2, h3, h4, h5, p, ul { margin: 0; padding: 0; }
ul { list-style: none; }
a { color: inherit; text-decoration: none; }
button { font: inherit; cursor: pointer; }
svg { fill: currentColor; flex: none; }
.sprite { position: absolute; width: 0; height: 0; }

/* Header */
.site-header {
  position: relative;
  z-index: 2;
  display: flex;
  align-items: center;
  justify-content: space-between;
  padding: 29px 96px 30px;
  background: linear-gradient(135deg, var(--navy), var(--navy-dark));
  box-shadow: 0 6px 30px rgba(0, 0, 0, .15);
}
.brand { display: flex; align-items: center; gap: 18px; color: var(--gold); }
.brand-icon { height: 42px; }
.brand-name {
  font: 700 36px/48px var(--serif);
  background: linear-gradient(135deg, #fff, #e8c95f);
  background-clip: text;
  -webkit-background-clip: text;
  color: transparent;
}
.main-nav { display: flex; gap: 12px; }
.nav-link {
  display: flex;
  align-items: center;
  gap: 12px;
  padding: 12px 24px;
  border: 0;
  border-radius: 12px;
  background: none;
  color: rgba(255, 255, 255, .9);
  font-weight: 500;
  line-height: 38px;
}
.nav-link svg { height: 24px; }
.nav-link.active { color: var(--gold); background: rgba(212, 175, 55, .12); }
.caret { margin-left: 6px; border: 7px solid transparent; border-top-color: currentColor; border-bottom: 0; }

/* Hero */
.hero {
  padding: 96px 24px 117px;
  text-align: center;
  color: #fff;
  background: linear-gradient(135deg, var(--navy-dark), var(--navy));
}
.hero h1 { margin-bottom: 16px; font: 700 72px/102px var(--serif); }
.hero p { font-size: 30px; line-height: 51px; opacity: .9; }
.side-tab {
  position: absolute;
  left: 0;
  top: 439px;
  width: 18px;
  height: 58px;
  padding: 0;
  border: 0;
  border-radius: 0 5px 5px 0;
  background: #6633a8;
}
.side-tab span { display: block; width: 0; margin-left: 6px; border: 7px solid transparent; border-left-color: #1aa88a; border-right: 0; }

/* Cards */
.page { padding: 96px 96px 191px; }
.contact-grid { display: grid; grid-template-columns: 978fr 678fr; gap: 72px; align-items: start; }
.side { display: grid; gap: 36px; }
.card {
  min-width: 0;
  padding: 36px;
  border: 1px solid #d3d6da;
  border-radius: 24px;
  background: #fff;
  box-shadow: 0 6px 9px rgba(0, 0, 0, .12);
}
.form-title { margin-bottom: 36px; color: var(--navy); font: 700 60px/72px var(--serif); }
.card-title { margin-bottom: 37px; color: var(--navy); font: 700 48px/57px var(--serif); }
.card-title.tight { margin-bottom: 25px; }

/* Form */
.form { display: grid; grid-template-columns: 1fr 1fr; gap: 36px; justify-items: start; }
.field { width: 100%; }
.wide { grid-column: 1 / -1; }
.field label { display: flex; align-items: center; gap: 7px; margin-bottom: 12px; font-weight: 600; }
.field label svg { height: 24px; }
input, textarea {
  display: block;
  width: 100%;
  padding: 18px 24px;
  border: 3px solid #d1d5db;
  border-radius: 12px;
  background: #fff;
  color: #374151;
  font: 24px/36px Inter, "Liberation Sans", sans-serif;
}
input { height: 77px; }
textarea { height: 258px; resize: vertical; }
::placeholder { color: #9ca3af; opacity: 1; }
.input-wrap { position: relative; }
.input-badge { position: absolute; right: 15px; top: 24px; width: 30px; height: 30px; }
.submit {
  display: flex;
  align-items: center;
  gap: 12px;
  padding: 18px 48px;
  border: 3px solid var(--navy);
  border-radius: 18px;
  background: linear-gradient(135deg, var(--navy), var(--navy-light)) padding-box;
  color: #fff;
  font-size: 27px;
  font-weight: 600;
}
.submit svg { height: 27px; }

/* Contact details */
.info-list li { display: flex; gap: 36px; margin-bottom: 48px; padding-bottom: 37px; border-bottom: 3px solid #f3f4f6; }
.info-list li:last-child { margin: 0; padding: 0; border: 0; }
.info-icon {
  display: grid;
  place-items: center;
  flex: none;
  width: 75px;
  height: 75px;
  border-radius: 18px;
  background: linear-gradient(135deg, var(--navy), var(--navy-light));
  color: #fff;
}
.info-icon svg { height: 31px; }
.info-list h4 { margin-bottom: 11px; color: var(--navy); font: 700 27px/33px var(--serif); }
.info-list p { color: #4b5563; font-size: 24px; line-height: 43px; }
.info-list p a { color: #374151; }
.follow { display: flex; gap: 24px; }
.follow a {
  display: grid;
  place-items: center;
  width: 75px;
  height: 75px;
  border-radius: 18px;
  background: #f3f4f6;
  color: var(--navy);
}
.follow svg { height: 30px; }

/* Map */
.map {
  position: relative;
  margin-top: 72px;
  padding-bottom: 12px;
  overflow: hidden;
  border-radius: 24px;
  background: #fafbfc;
  box-shadow: 0 15px 30px rgba(0, 0, 0, .1);
  font-family: Roboto, sans-serif;
}
.map-canvas { display: block; width: 100%; height: 675px; }
.roads path { vector-effect: non-scaling-stroke; }
.roads path, .highways path { fill: none; stroke-linecap: round; stroke-linejoin: round; }
.roads .area-grey { fill: #e8eaee; }
.roads .area-sand { fill: #f8f0dd; }
.roads .area-pink { fill: #fbe4e6; }
.roads .area-green { fill: #b3ebc8; }
.roads .s { stroke: #cfdae4; stroke-width: 3px; }
.roads .m { stroke: #cbd6df; stroke-width: 7px; }
.roads .l-edge { stroke: #c1cdd6; stroke-width: 12px; }
.roads .l { stroke: #d4dee6; stroke-width: 10px; }
.highways .h-edge { stroke: #bfcbd5; }
.highways .h-node-edge { fill: #bfcbd5; }
.highways .h { stroke: #d6dfe7; }
.highways path[fill] { fill: #d6dfe7; }
.island { fill: #f5f5f5; stroke: #c1cdd6; }
.highways .arrow { stroke: #7d858e; stroke-width: 2px; }
.map text { paint-order: stroke; stroke: #f7f8f9; stroke-width: 4px; stroke-linejoin: round; }
.streets { fill: #46566b; font-size: 20px; font-weight: 500; text-anchor: middle; dominant-baseline: central; }
.streets .minor { fill: #72787e; font-weight: 400; }
.streets .major { fill: #3c4a5c; font-weight: 700; }
.places { font-size: 21px; }
.places .end { text-anchor: end; }
.places .grey { fill: #5d7886; }
.places .orange { fill: #dc6310; }
.places .blue { fill: #1f74ea; }
.places .green { fill: #1a8a5f; }
.places .purple { fill: #8e49de; }
.pin-shell { fill: #fff; stroke: #b9c0c6; stroke-width: 1px; }
.map .google { font: 500 22px Lato, sans-serif; text-anchor: middle; }
.map-enlarge {
  position: absolute;
  left: 15px;
  top: 15px;
  padding: 0 22px;
  border-radius: 3px;
  background: #fff;
  box-shadow: 0 1px 4px rgba(0, 0, 0, .3);
  color: #1a73e8;
  font-size: 18px;
  line-height: 40px;
}
.map-layer {
  position: absolute;
  left: 15px;
  bottom: 28px;
  width: 62px;
  height: 62px;
  padding: 0;
  overflow: hidden;
  border: 3px solid #fff;
  border-radius: 4px;
  box-shadow: 0 2px 6px rgba(0, 0, 0, .4);
}
.map-layer svg { display: block; width: 100%; height: 100%; }
.map-move {
  position: absolute;
  right: 15px;
  bottom: 48px;
  width: 60px;
  height: 60px;
  padding: 0;
  border: 0;
  border-radius: 50%;
  background: #fff;
  box-shadow: 0 1px 4px rgba(0, 0, 0, .2);
}
.map-move svg { display: block; }
.map-credits {
  position: absolute;
  right: 0;
  bottom: 12px;
  display: flex;
  padding: 0 9px;
  background: rgba(245, 245, 245, .7);
  color: #000;
  font-size: 15px;
  line-height: 21px;
}
.map-credits > * + * { margin-left: 9px; padding-left: 8px; border-left: 1px dashed #999; }

/* Footer */
.site-footer { background: linear-gradient(135deg, var(--navy-dark), var(--navy)); color: rgba(255, 255, 255, .8); }
.footer-main { display: grid; grid-template-columns: 552fr 258fr 405fr 405fr; gap: 36px; padding: 96px 96px 91px; }
.footer-main h5 { display: flex; flex-wrap: wrap; align-items: center; margin-bottom: 36px; color: #fff; font: 700 30px/36px var(--serif); }
.footer-main h5 svg { height: 30px; margin-right: 20px; color: var(--gold); }
.footer-main h5::after { content: ""; flex: none; width: 75px; height: 4px; margin: 8px calc(100% - 75px) 0 0; border-radius: 2px; background: var(--gold); }
.about { line-height: 43px; margin-bottom: 37px; }
.socials { display: flex; gap: 12px; }
.socials a {
  display: grid;
  place-items: center;
  width: 60px;
  height: 60px;
  border: 3px solid rgba(255, 255, 255, .2);
  border-radius: 12px;
  background: rgba(255, 255, 255, .1);
  color: #fff;
}
.socials svg { height: 27px; }
.links { display: grid; gap: 11px; padding-left: 33px; }
.reach { display: grid; gap: 23px; }
.reach li { display: flex; }
.reach-icon { display: flex; align-items: center; flex: none; width: 54px; height: 36px; color: var(--gold); }
.reach-icon svg { height: 28px; }
.footer-bottom {
  display: flex;
  align-items: center;
  justify-content: space-between;
  padding: 36px 96px;
  border-top: 1px solid rgba(255, 255, 255, .1);
  color: rgba(255, 255, 255, .7);
  font-size: 22px;
}
.legal { display: flex; align-items: center; padding-right: 142px; }
.legal a { line-height: 29px; }
.legal a + a { margin-left: 12px; padding-left: 20px; border-left: 2px solid rgba(255, 255, 255, .3); }

.whatsapp-float {
  position: fixed;
  right: 45px;
  bottom: 45px;
  z-index: 5;
  display: grid;
  place-items: center;
  width: 90px;
  height: 90px;
  border-radius: 50%;
  background: linear-gradient(135deg, #25d366, #128c7e);
  box-shadow: 0 6px 30px rgba(37, 211, 102, .4);
  color: #fff;
}
.whatsapp-float svg { height: 42px; }
```
